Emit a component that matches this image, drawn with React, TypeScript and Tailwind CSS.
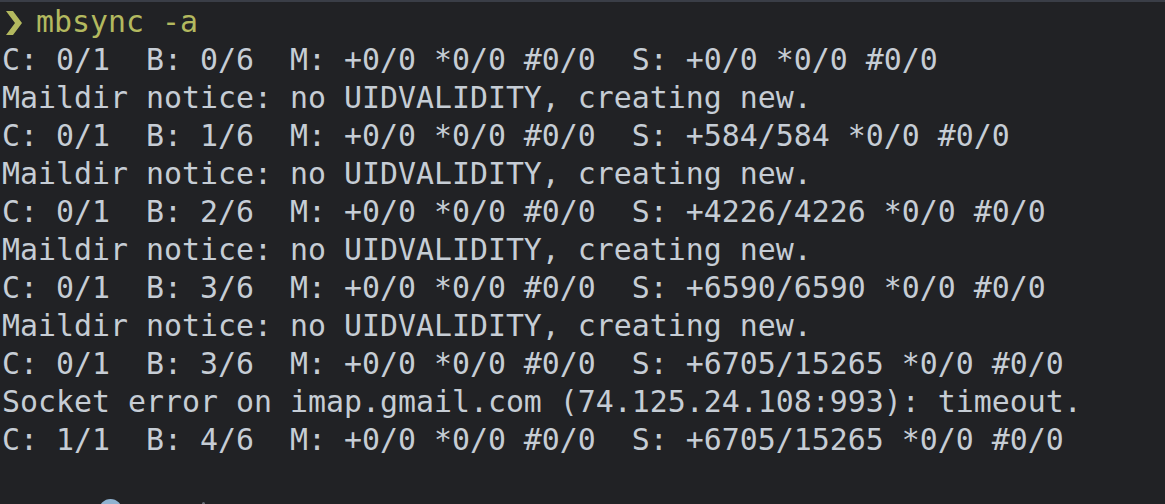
const lines = [
  'C: 0/1  B: 0/6  M: +0/0 *0/0 #0/0  S: +0/0 *0/0 #0/0',
  'Maildir notice: no UIDVALIDITY, creating new.',
  'C: 0/1  B: 1/6  M: +0/0 *0/0 #0/0  S: +584/584 *0/0 #0/0',
  'Maildir notice: no UIDVALIDITY, creating new.',
  'C: 0/1  B: 2/6  M: +0/0 *0/0 #0/0  S: +4226/4226 *0/0 #0/0',
  'Maildir notice: no UIDVALIDITY, creating new.',
  'C: 0/1  B: 3/6  M: +0/0 *0/0 #0/0  S: +6590/6590 *0/0 #0/0',
  'Maildir notice: no UIDVALIDITY, creating new.',
  'C: 0/1  B: 3/6  M: +0/0 *0/0 #0/0  S: +6705/15265 *0/0 #0/0',
  'Socket error on imap.gmail.com (74.125.24.108:993): timeout.',
  'C: 1/1  B: 4/6  M: +0/0 *0/0 #0/0  S: +6705/15265 *0/0 #0/0',
];

function Chevron() {
  return (
    <svg width="34" height="38" viewBox="0 0 34 38" className="shrink-0">
      <polygon points="4,8 11,8 20,20 11,32 4,32 13,20" fill="#b3b95f" />
    </svg>
  );
}

export default function App() {
  return (
    <div className="w-full h-screen overflow-hidden bg-[#212225] border-t-2 border-[#3a3e47]">
      <div
        className="pl-[2px] pt-[1px] text-[29.9px] leading-[38px] text-[#c6cdd5] whitespace-pre"
        style={{ fontFamily: '"DejaVu Sans Mono", "Liberation Mono", monospace' }}
      >
        <div className="flex items-center h-[38px]">
          <Chevron />
          <span className="text-[#b3b95f]">mbsync -a</span>
        </div>
        {lines.map((l, i) => (
          <div key={i} className="h-[38px]">{l}</div>
        ))}
        <div className="h-[38px]" />
        <div className="flex items-start h-[38px] pl-[97px] pt-[2px] gap-[80px]">
          <div className="w-[23px] h-[23px] rounded-full bg-[#8fb2d0]" />
          <div className="w-[3px] h-[3px] mt-[3px] rounded-full bg-[#6b7078]" />
        </div>
      </div>
    </div>
  );
}
